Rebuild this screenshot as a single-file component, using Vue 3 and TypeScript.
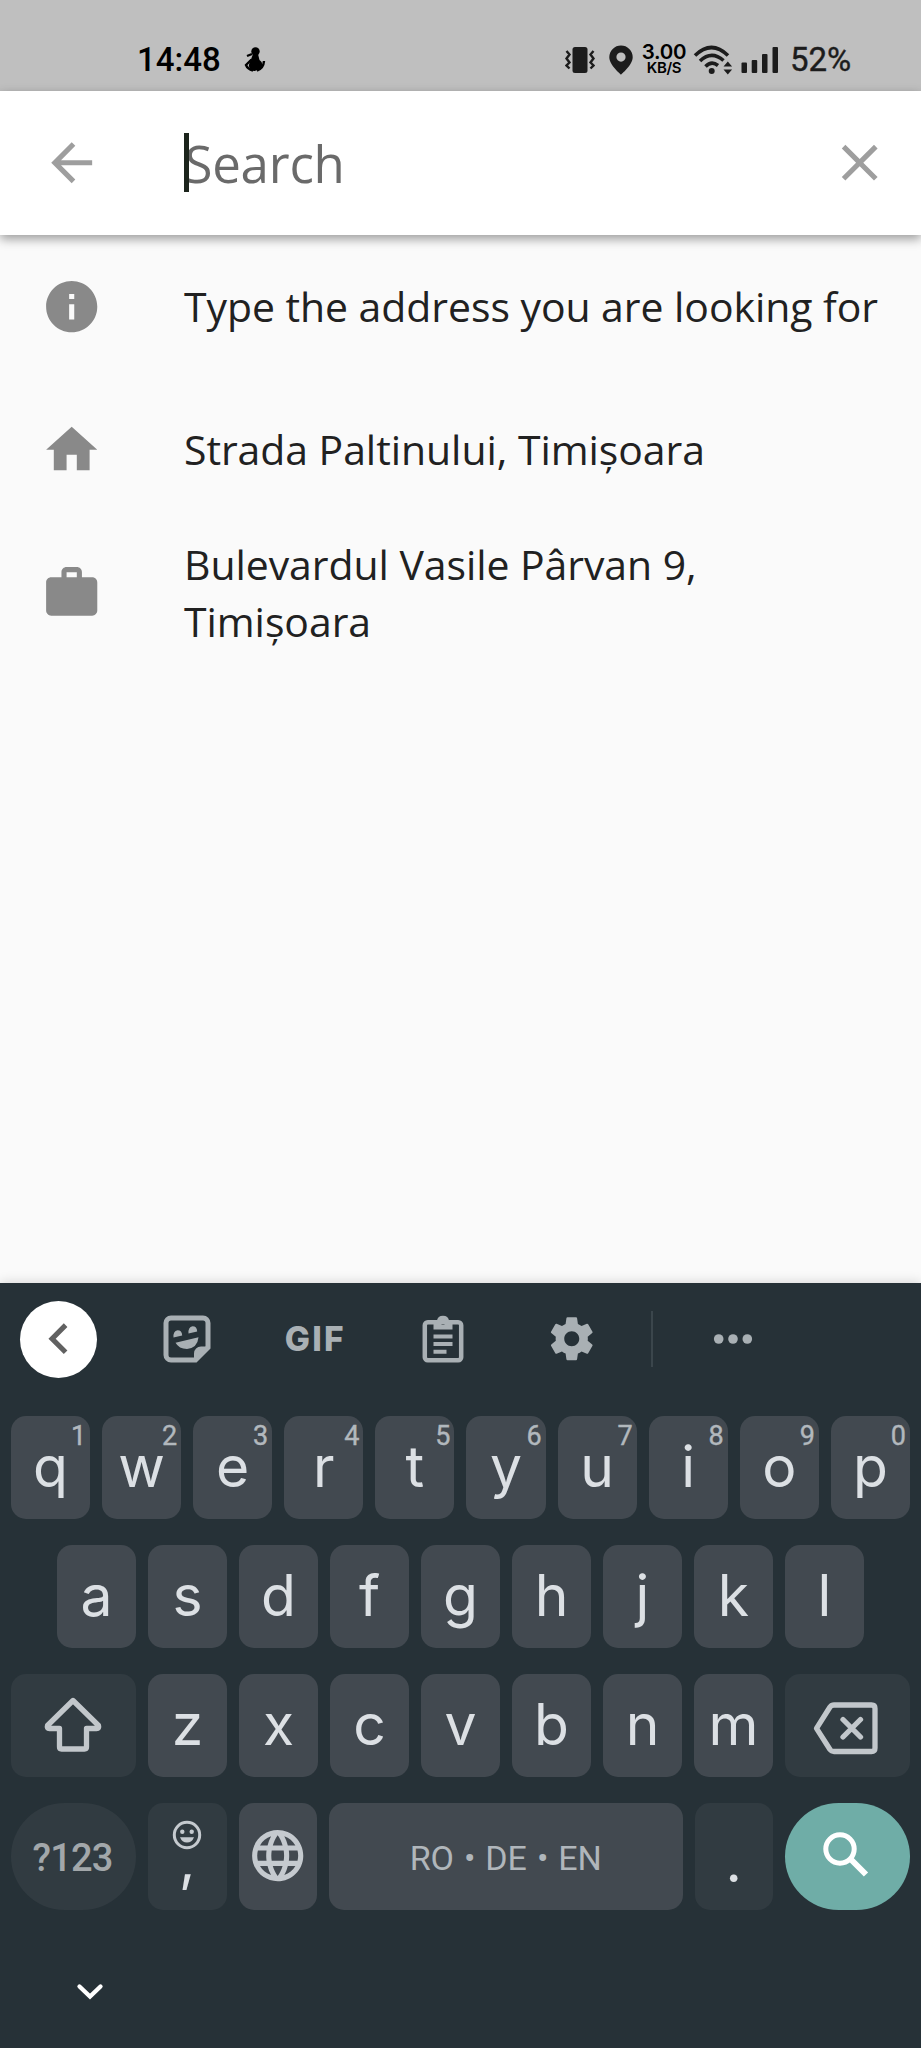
<script setup lang="ts">
interface Place {
  icon: string
  label: string
}

interface LetterKey {
  label: string
  hint?: string
}

const places: Place[] = [
  {
    icon: 'M12 2C6.48 2 2 6.48 2 12s4.48 10 10 10 10-4.48 10-10S17.52 2 12 2zm1 15h-2v-6h2v6zm0-8h-2V7h2v2z',
    label: 'Type the address you are looking for',
  },
  {
    icon: 'M10 20v-6h4v6h5v-8h3L12 3 2 12h3v8z',
    label: 'Strada Paltinului, Timișoara',
  },
  {
    icon: 'M20 6h-4V4c0-1.11-.89-2-2-2h-4c-1.11 0-2 .89-2 2v2H4c-1.11 0-2 .89-2 2v11c0 1.11.89 2 2 2h16c1.11 0 2-.89 2-2V8c0-1.11-.89-2-2-2zm-6 0h-4V4h4v2z',
    label: 'Bulevardul Vasile Pârvan 9, Timișoara',
  },
]

const topRow: LetterKey[] = [...'qwertyuiop'].map((label, i) => ({
  label,
  hint: String((i + 1) % 10),
}))
const homeRow: string[] = [...'asdfghjkl']
const bottomRow: string[] = [...'zxcvbnm']
</script>

<template>
  <div class="screen">
    <header class="status">
      <span class="clock">14:48</span>
      <svg class="notice" width="22" height="26" viewBox="0 0 22 26">
        <circle cx="11.500" cy="4.500" r="4.200" />
        <path d="M9 7h5l1.500 6a6.500 5.500 0 0 1-1 9.500q-4 2.500-7.500 .500a6 6 0 0 1-1-8z" />
        <path class="line" d="M7.500 12.500L2 18q1.500 4 7 5.500M13 23.500q6.500-2 7-9.500M3 9l5-2" />
      </svg>
      <svg width="30" height="28" viewBox="0 0 30 28">
        <rect x="7.500" y="1" width="15" height="26" rx="2.500" />
        <path class="zig" d="M1.500 5l3 3.500-3 4 3 4-3 3 3 3M28.500 5l-3 3.500 3 4-3 4 3 3-3 3" />
      </svg>
      <svg width="24" height="30" viewBox="0 0 24 30">
        <path fill-rule="evenodd" d="M12 .500A11.700 11.700 0 0 0 .300 12.200C.300 20 12 29.500 12 29.500S23.700 20 23.700 12.200A11.700 11.700 0 0 0 12 .500zM12 7.500a4.600 4.600 0 1 1 0 9.200 4.600 4.600 0 0 1 0-9.200z" />
      </svg>
      <div class="speed"><b>3.00</b><span>KB/S</span></div>
      <svg width="40" height="30" viewBox="0 0 40 30">
        <path class="arc" d="M2 10.500Q18.500-5.500 35 10.500M7 16Q18.500 5 30.500 15.500M12.500 21.500Q18.500 15.500 25 20.500" />
        <circle cx="18.700" cy="26" r="3" />
        <path d="M30.500 21.500l4.300-5 4.300 5zM30.500 24.500l4.300 5 4.300-5z" />
      </svg>
      <svg width="38" height="28" viewBox="0 0 38 28">
        <rect x="0.500" y="16.500" width="5.500" height="10.500" rx="1" />
        <rect x="10.700" y="14" width="5.500" height="13" rx="1" />
        <rect x="21" y="8" width="5.500" height="19" rx="1" />
        <rect x="31.500" y="1" width="5.500" height="26" rx="1" />
      </svg>
      <span class="battery">52%</span>
    </header>

    <div class="search">
      <svg class="icon" viewBox="0 0 24 24">
        <path d="M20 11H7.830l5.590-5.590L12 4l-8 8 8 8 1.410-1.410L7.830 13H20v-2z" />
      </svg>
      <div class="field"><span class="placeholder">Search</span><i class="caret"></i></div>
      <svg class="icon" viewBox="0 0 24 24">
        <path d="M19 6.410L17.590 5 12 10.590 6.410 5 5 6.410 10.590 12 5 17.590 6.410 19 12 13.410 17.590 19 19 17.590 13.410 12z" />
      </svg>
    </div>

    <main class="results">
      <div v-for="place in places" :key="place.label" class="place">
        <svg class="icon" viewBox="0 0 24 24"><path fill-rule="evenodd" :d="place.icon" /></svg>
        <span>{{ place.label }}</span>
      </div>
    </main>

    <section class="keyboard">
      <div class="tools">
        <div class="back">
          <svg class="icon" viewBox="0 0 24 24">
            <path d="M15.410 7.410L14 6l-6 6 6 6 1.410-1.410L10.830 12z" />
          </svg>
        </div>
        <div class="tool">
          <svg width="48" height="48" viewBox="0 0 48 48">
            <path class="outline" d="M8 3h32a5 5 0 0 1 5 5v24.500L32.500 45H8a5 5 0 0 1-5-5V8a5 5 0 0 1 5-5z" />
            <path d="M31 46V38.500a7 7 0 0 1 7-7H46z" />
            <path d="M10.500 22.500q-.500-6.500 4-7.200 4.500 0 4.700 5.200zM25.500 18.500q-.500-6.500 4-7.200 4.500 0 4.700 5.200zM12.500 27.800l23-5.500Q34.500 33 24 34 16 34 12.500 27.800z" />
          </svg>
        </div>
        <div class="tool gif">GIF</div>
        <div class="tool">
          <svg width="42" height="48" viewBox="0 0 42 48">
            <rect class="outline thin" x="2.800" y="7.300" width="36.400" height="37.900" rx="3" />
            <path fill-rule="evenodd" d="M11.500 14.500V6h3.300a6.300 6.300 0 0 1 12.400 0h3.300v8.500zM21 5a2.500 2.500 0 1 0 .01 0z" />
            <path d="M11.500 19.500h19v4h-19zM11.500 27h19v4h-19zM11.500 34.700h13v4h-13z" />
          </svg>
        </div>
        <div class="tool">
          <svg width="51.500" height="51.500" viewBox="0 0 24 24">
            <path d="M19.430 12.980c.040-.320.070-.640.070-.980s-.030-.660-.070-.980l2.110-1.650c.190-.150.240-.420.120-.640l-2-3.460c-.120-.220-.390-.300-.610-.220l-2.490 1c-.520-.400-1.080-.730-1.690-.980l-.380-2.650C14.460 2.180 14.250 2 14 2h-4c-.250 0-.460.180-.490.420l-.380 2.650c-.610.250-1.170.590-1.690.980l-2.490-1c-.230-.090-.490 0-.610.220l-2 3.460c-.130.220-.070.490.120.640l2.110 1.650c-.040.320-.070.650-.070.980s.030.660.070.980l-2.110 1.650c-.190.150-.240.420-.120.640l2 3.460c.120.220.390.300.610.220l2.490-1c.520.400 1.080.730 1.690.980l.380 2.650c.030.240.240.420.490.420h4c.250 0 .460-.180.490-.420l.380-2.650c.610-.250 1.170-.590 1.690-.980l2.490 1c.230.090.490 0 .610-.220l2-3.460c.120-.220.070-.490-.120-.640l-2.110-1.650zM12 15.500c-1.930 0-3.500-1.570-3.500-3.500s1.570-3.500 3.500-3.500 3.500 1.570 3.500 3.500-1.570 3.500-3.500 3.500z" />
          </svg>
        </div>
        <i class="divider"></i>
        <div class="tool">
          <svg width="40" height="10" viewBox="0 0 40 10">
            <circle cx="5.700" cy="5" r="4.800" /><circle cx="20" cy="5" r="4.800" /><circle cx="34.300" cy="5" r="4.800" />
          </svg>
        </div>
      </div>

      <div class="rows">
        <div class="row">
          <div v-for="key in topRow" :key="key.label" class="key">
            {{ key.label }}<small class="hint">{{ key.hint }}</small>
          </div>
        </div>
        <div class="row home">
          <div v-for="label in homeRow" :key="label" class="key">{{ label }}</div>
        </div>
        <div class="row">
          <div class="key wide dim shift">
            <svg width="60" height="56" viewBox="0 0 60 56">
              <path class="stroke" d="M30 4.500L4.500 29.500Q3.500 32.500 6.500 32.500H16.500V51Q16.500 53 18.500 53H41.500Q43.500 53 43.500 51V32.500H53.500Q56.500 32.500 55.500 29.500Z" />
            </svg>
          </div>
          <div v-for="label in bottomRow" :key="label" class="key">{{ label }}</div>
          <div class="key wide dim erase">
            <svg width="66" height="54" viewBox="0 0 66 54">
              <path class="stroke" d="M21 4H58.500Q62 4 62 7.500V47Q62 50.500 58.500 50.500H21Q18.500 50.500 17 48.500L3.500 27.300 17 6Q18.500 4 21 4Z" />
              <path class="stroke round" d="M30 18.500l17.500 17.500M47.500 18.500L30 36" />
            </svg>
          </div>
        </div>
        <div class="row last">
          <div class="key wide dim pill symbols">?123</div>
          <div class="key dim comma">
            <svg width="30" height="30" viewBox="0 0 30 30">
              <circle class="ring" cx="15" cy="15" r="12.700" />
              <circle cx="10.300" cy="11.800" r="2.200" /><circle cx="19.700" cy="11.800" r="2.200" />
              <path d="M8 17.300h14q-2 5.200-7 5.200t-7-5.200z" />
            </svg>
            <span>,</span>
          </div>
          <div class="key globe">
            <svg class="icon" viewBox="0 0 24 24">
              <path d="M11.990 2C6.470 2 2 6.480 2 12s4.470 10 9.990 10C17.520 22 22 17.520 22 12S17.520 2 11.990 2zm6.930 6h-2.950c-.320-1.250-.780-2.450-1.380-3.560 1.840.630 3.370 1.910 4.330 3.560zM12 4.040c.830 1.200 1.480 2.530 1.910 3.960h-3.820c.430-1.430 1.080-2.760 1.910-3.960zM4.260 14C4.100 13.360 4 12.690 4 12s.100-1.360.260-2h3.380c-.080.660-.140 1.320-.140 2 0 .680.060 1.340.140 2H4.260zm.820 2h2.950c.320 1.250.780 2.450 1.380 3.560-1.840-.630-3.370-1.900-4.330-3.560zm2.950-8H5.080c.960-1.660 2.490-2.930 4.330-3.560C8.810 5.550 8.350 6.750 8.030 8zM12 19.960c-.830-1.200-1.480-2.530-1.910-3.960h3.820c-.430 1.430-1.080 2.760-1.910 3.960zM14.340 14H9.660c-.090-.660-.160-1.320-.160-2 0-.680.070-1.350.160-2h4.680c.090.650.160 1.320.160 2 0 .680-.070 1.340-.160 2zm.250 5.560c.600-1.110 1.060-2.310 1.380-3.560h2.950c-.960 1.650-2.490 2.930-4.330 3.560zM16.360 14c.080-.660.140-1.320.140-2 0-.680-.060-1.340-.140-2h3.380c.160.640.260 1.310.260 2s-.100 1.360-.260 2h-3.380z" />
            </svg>
          </div>
          <div class="key space">RO • DE • EN</div>
          <div class="key dim dot">.</div>
          <div class="key wide pill go">
            <svg width="46" height="46" viewBox="0 0 46 46">
              <circle cx="17" cy="17" r="14.200" /><path class="handle" d="M28 27.500L43 42.500" />
            </svg>
          </div>
        </div>
      </div>

      <footer class="nav">
        <svg width="30" height="20" viewBox="0 0 30 20"><path d="M4.500 4.500L15 14.500 25.500 4.500" /></svg>
      </footer>
    </section>
  </div>
</template>

<style>
body {
  margin: 0;
}
</style>

<style scoped>
.screen {
  width: 921px;
  height: 2048px;
  display: flex;
  flex-direction: column;
  overflow: hidden;
  background: #fafafa;
  font-family: "Open Sans", sans-serif;
}
.icon {
  width: 61.400px;
  height: 61.400px;
  flex: none;
}
.status {
  height: 91px;
  flex: none;
  box-sizing: border-box;
  padding: 28px 0 0 137px;
  display: grid;
  grid-template-columns: 107px 321px 44px 33px 51px 48px 49px auto;
  align-items: center;
  background: #bfbfbf;
  color: #1c1c1c;
  fill: #1c1c1c;
  font-family: Roboto, sans-serif;
  font-size: 33px;
  line-height: 40px;
  white-space: nowrap;
}
.status svg {
  display: block;
}
.clock {
  color: #000;
  font-weight: 500;
}
.notice {
  fill: #000;
}
.line,
.zig,
.arc {
  fill: none;
  stroke: #1c1c1c;
  stroke-width: 2.400;
}
.line {
  stroke: #000;
}
.arc {
  stroke-width: 3.600;
}
.speed {
  width: 44px;
  display: flex;
  flex-direction: column;
  align-items: center;
  color: #000;
  font-family: Inter, sans-serif;
}
.speed b {
  font-size: 20.500px;
  font-weight: 600;
  line-height: 16px;
  letter-spacing: -0.300px;
}
.speed span {
  font-size: 15px;
  font-weight: 600;
  line-height: 16px;
  letter-spacing: -0.300px;
}
.battery {
  -webkit-text-stroke: 0.400px #1c1c1c;
}
.search {
  position: relative;
  z-index: 1;
  height: 144px;
  flex: none;
  box-sizing: border-box;
  padding: 0 31px 0 41px;
  display: flex;
  align-items: center;
  background: #fff;
  box-shadow: 0 4px 10px rgba(0, 0, 0, 0.380);
  fill: #9e9e9e;
}
.field {
  position: relative;
  flex: 1;
  margin-left: 82px;
  font-size: 51px;
  line-height: 60px;
  letter-spacing: -0.200px;
  color: #6a6a6a;
}
.caret {
  position: absolute;
  left: 0;
  top: 0;
  width: 5px;
  height: 59px;
  background: #1c241c;
}
.results {
  flex: 1;
  color: #212121;
  fill: #898989;
  font-size: 40.930px;
  line-height: 57.300px;
  letter-spacing: -0.040px;
}
.place {
  height: 143.250px;
  padding: 0 40px 0 41px;
  display: flex;
  align-items: center;
  gap: 81.600px;
}
.place span {
  max-width: 700px;
}
.keyboard {
  position: relative;
  height: 765px;
  flex: none;
  box-sizing: border-box;
  background: #263137;
  box-shadow: 0 -2px 10px rgba(0, 0, 0, 0.120);
  font-family: Inter, sans-serif;
  color: #dce0e4;
  fill: #a9b0b4;
}
.tools {
  height: 112px;
  padding-left: 20px;
  display: flex;
  align-items: center;
}
.back {
  width: 77px;
  height: 77px;
  margin-right: 26.300px;
  border-radius: 50%;
  background: #fff;
  fill: #616161;
  display: flex;
  align-items: center;
  justify-content: center;
}
.tool {
  width: 128px;
  display: flex;
  justify-content: center;
}
.gif {
  color: #a9b0b4;
  font-size: 33.500px;
  line-height: 40px;
  font-weight: 800;
  letter-spacing: 2.200px;
}
.outline {
  fill: none;
  stroke: #a9b0b4;
  stroke-width: 5;
}
.thin {
  stroke-width: 4.500;
}
.divider {
  width: 2px;
  height: 56px;
  margin: 0 16px 0 15.500px;
  background: #3b464c;
}
.rows {
  padding: 20.700px 11px 0;
  display: flex;
  flex-direction: column;
  gap: 25.700px;
}
.row {
  height: 103.300px;
  display: flex;
  gap: 12px;
}
.home {
  padding: 0 46px;
}
.last {
  height: 107px;
}
.key {
  position: relative;
  flex: 1 1 0;
  box-sizing: border-box;
  padding-bottom: 1px;
  display: flex;
  align-items: center;
  justify-content: center;
  border-radius: 15px;
  background: #424950;
  fill: #c5cacf;
  font-size: 57px;
  line-height: 60px;
}
.hint {
  position: absolute;
  top: 7px;
  right: 4px;
  font-family: Roboto, sans-serif;
  font-size: 27px;
  line-height: 27px;
  color: #b2b8bd;
  -webkit-text-stroke: 0.400px #b2b8bd;
}
.wide {
  flex: 0 0 125px;
}
.dim {
  background: #313b41;
}
.pill {
  border-radius: 54px;
}
.shift {
  padding: 0 1px 2px 0;
}
.erase {
  padding: 6px 4px 0 0;
}
.globe {
  padding: 0;
}
.stroke {
  fill: none;
  stroke: #c2c7cb;
  stroke-width: 5.300;
  stroke-linejoin: round;
}
.round {
  stroke-linecap: round;
}
.symbols {
  padding: 4px 2px 0 0;
  font-family: Roboto, sans-serif;
  font-size: 38px;
  font-weight: 500;
  letter-spacing: -0.800px;
  color: #a2a7aa;
}
.comma {
  flex-direction: column;
  justify-content: flex-start;
  padding-top: 17px;
}
.comma span {
  line-height: 60px;
  margin-top: -20px;
}
.ring {
  fill: none;
  stroke: #c5cacf;
  stroke-width: 3;
}
.space {
  flex: 0 0 353.500px;
  padding: 3px 0 0;
  font-family: Roboto, sans-serif;
  font-size: 34px;
  word-spacing: 1.500px;
  color: #b0b6bb;
}
.dot {
  padding: 11px 0 0;
}
.go {
  padding: 0 3px 2px 0;
  background: #6fada7;
}
.go svg {
  fill: none;
  stroke: #fff;
  stroke-width: 5;
}
.handle {
  stroke-width: 6;
}
.nav {
  padding: 72px 0 0 74.500px;
}
.nav path {
  fill: none;
  stroke: #fff;
  stroke-width: 4.300;
  stroke-linecap: round;
}
</style>
